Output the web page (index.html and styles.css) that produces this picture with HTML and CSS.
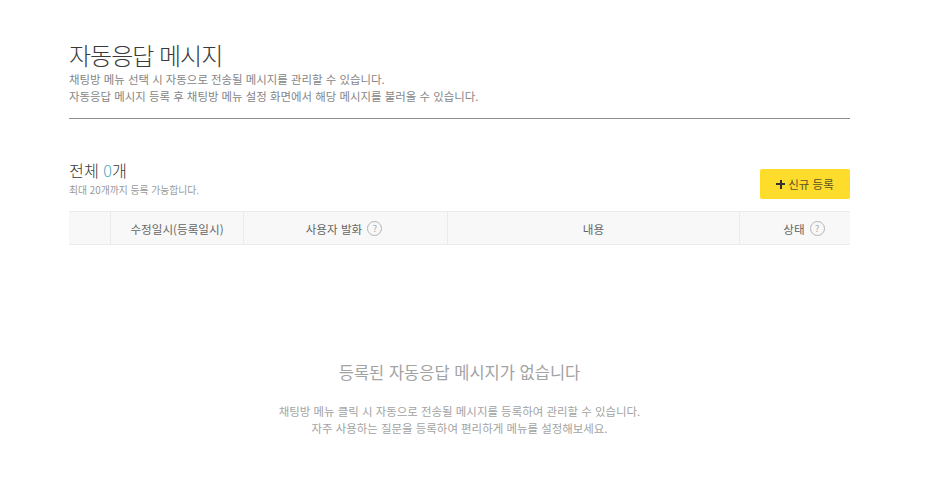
FILE: index.html
```html
<!DOCTYPE html>
<html lang="ko">
  <head>
    <meta charset="UTF-8" />
    <title>자동응답 메시지</title>
    <link rel="stylesheet" href="styles.css">
  </head>
  <body>
    <div class="container">
      <div class="page-head">
        <h1>자동응답 메시지</h1>
        <p>채팅방 메뉴 선택 시 자동으로 전송될 메시지를 관리할 수 있습니다.</p>
        <p>자동응답 메시지 등록 후 채팅방 메뉴 설정 화면에서 해당 메시지를 불러올 수 있습니다.</p>
      </div>

      <div class="list-head">
        <div>
          <h2>전체 <em>0</em>개</h2>
          <p>최대 20개까지 등록 가능합니다.</p>
        </div>
        <button class="add-button"><span class="plus"></span>신규 등록</button>
      </div>

      <div class="table-head">
        <div class="cell cell-check"></div>
        <div class="cell cell-date">수정일시(등록일시)</div>
        <div class="cell cell-user">사용자 발화<span class="help">?</span></div>
        <div class="cell cell-content">내용</div>
        <div class="cell cell-state">상태<span class="help">?</span></div>
      </div>

      <div class="empty">
        <h3>등록된 자동응답 메시지가 없습니다</h3>
        <p>채팅방 메뉴 클릭 시 자동으로 전송될 메시지를 등록하여 관리할 수 있습니다.</p>
        <p>자주 사용하는 질문을 등록하여 편리하게 메뉴를 설정해보세요.</p>
      </div>
    </div>
  </body>
</html>
```

FILE: styles.css
```css
body {
  font-family: "Noto Sans CJK KR", "Noto Sans", sans-serif;
  margin: 0;
  background-color: #fff;
  color: #333;
}
h1, h2, h3, p {
  margin: 0;
  font-weight: 400;
}
.container {
  width: 781px;
  margin-left: 69px;
}
.page-head {
  padding-top: 38px;
  height: 80px;
  border-bottom: 1px solid #8c8c8c;
}
.page-head h1 {
  font-size: 24px;
  line-height: 33px;
  letter-spacing: -1px;
  font-weight: 300;
  color: #3a3a3a;
}
.page-head p {
  font-size: 11.43px;
  line-height: 17px;
  color: #858585;
}
.list-head {
  display: flex;
  justify-content: space-between;
  align-items: flex-end;
  margin-top: 41px;
  height: 39px;
}
.list-head h2 {
  font-size: 16.2px;
  line-height: 23px;
  font-weight: 300;
  color: #3a3a3a;
}
.list-head em {
  font-style: normal;
  color: #4aa9bb;
}
.list-head p {
  font-size: 9.8px;
  line-height: 17px;
  color: #999;
}
.add-button {
  display: flex;
  align-items: center;
  justify-content: center;
  width: 90px;
  height: 30px;
  padding: 0;
  border: none;
  border-radius: 2px;
  background-color: #fddc2c;
  color: #5a5328;
  font-family: inherit;
  font-size: 11.5px;
}
.plus {
  width: 9px;
  height: 9px;
  margin-right: 3px;
  background:
    linear-gradient(#333, #333) center / 9px 2px no-repeat,
    linear-gradient(#333, #333) center / 2px 9px no-repeat;
}
.table-head {
  display: flex;
  height: 32px;
  margin-top: 12px;
  background-color: #f8f8f8;
  border-top: 1px solid #ebebeb;
  border-bottom: 1px solid #ebebeb;
}
.cell {
  display: flex;
  align-items: center;
  justify-content: center;
  box-sizing: border-box;
  padding-top: 1px;
  border-left: 1px solid #ebebeb;
  font-size: 11.6px;
  color: #666;
}
.cell-check {
  width: 41px;
  border-left: none;
}
.cell-date {
  width: 133px;
}
.cell-user {
  width: 204px;
  padding-right: 3px;
}
.cell-content {
  width: 292px;
}
.cell-state {
  width: 111px;
  padding-left: 18px;
}
.help {
  box-sizing: border-box;
  width: 15px;
  height: 15px;
  margin-left: 5px;
  border: 1px solid #b4b4b4;
  border-radius: 50%;
  font-size: 9px;
  line-height: 13px;
  text-align: center;
  color: #aaa;
}
.empty {
  margin-top: 114px;
  text-align: center;
}
.empty h3 {
  font-size: 16.5px;
  line-height: 26px;
  margin-bottom: 18px;
  color: #a3a3a3;
}
.empty p {
  font-size: 11.45px;
  line-height: 17px;
  color: #a3a3a3;
}
```
